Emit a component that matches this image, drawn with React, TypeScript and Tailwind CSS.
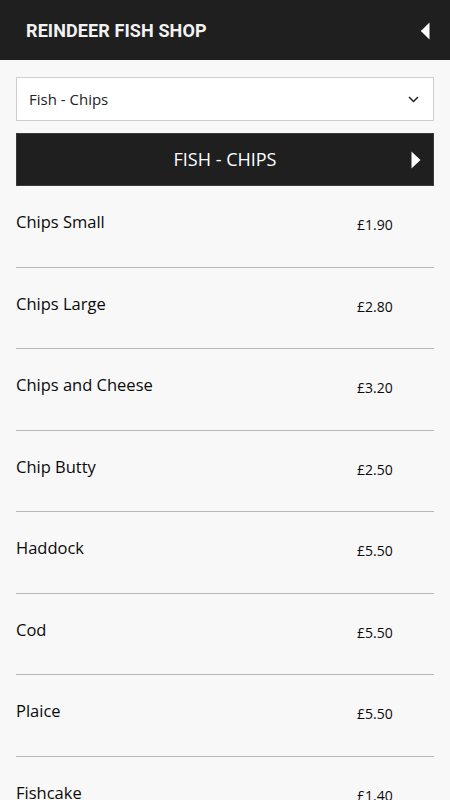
import React from "react";

const items = [
  { name: "Chips Small", price: "£1.90" },
  { name: "Chips Large", price: "£2.80" },
  { name: "Chips and Cheese", price: "£3.20" },
  { name: "Chip Butty", price: "£2.50" },
  { name: "Haddock", price: "£5.50" },
  { name: "Cod", price: "£5.50" },
  { name: "Plaice", price: "£5.50" },
  { name: "Fishcake", price: "£1.40" },
];

const App = () => {
  return (
    <div className="min-h-screen bg-[#f8f8f8] font-['Open_Sans',sans-serif] text-[#111]">
      {/* Header */}
      <header className="flex h-[60px] items-center justify-between bg-[#1f1f1f] pl-[26px] pr-[20px]">
        <h1 className="font-['Roboto',sans-serif] text-[18px] font-bold tracking-[0.1px] text-[#f2f2f2]">
          REINDEER FISH SHOP
        </h1>
        <svg width="10" height="18" viewBox="0 0 10 18" className="mt-[1px]">
          <path d="M9.5 0.5 L9.5 17.5 L0.8 9 Z" fill="#ffffff" />
        </svg>
      </header>

      <main className="px-4 pt-[17px]">
        {/* Category select */}
        <div className="flex h-[44px] items-center justify-between border border-[#cfcfcf] bg-white pl-3 pr-[14px]">
          <span className="text-[15px] text-[#222]">Fish - Chips</span>
          <svg width="11" height="7" viewBox="0 0 11 7">
            <path d="M1 1 L5.5 5.5 L10 1" fill="none" stroke="#222" strokeWidth="1.5" />
          </svg>
        </div>

        {/* Category bar */}
        <div className="relative mt-3 flex h-[53px] items-center justify-center border border-[#3a3a3a] bg-[#1f1f1f]">
          <span className="text-[18px] font-medium text-white">FISH - CHIPS</span>
          <svg width="10" height="18" viewBox="0 0 10 18" className="absolute right-[12px] top-[17px]">
            <path d="M0.5 0.5 L0.5 17.5 L9.5 9 Z" fill="#ffffff" />
          </svg>
        </div>

        {/* Items */}
        <ul>
          {items.map((item) => (
            <li
              key={item.name}
              className="flex h-[81.5px] items-start border-b border-[#b8b8b8]"
            >
              <span className="flex-1 pt-[24px] text-[16.5px] font-medium leading-6 text-[#0a0a0a]">
                {item.name}
              </span>
              <span className="w-[77px] pt-[29px] text-[14px] leading-5 text-[#0a0a0a]">{item.price}</span>
            </li>
          ))}
        </ul>
      </main>
    </div>
  );
};

export default App;
